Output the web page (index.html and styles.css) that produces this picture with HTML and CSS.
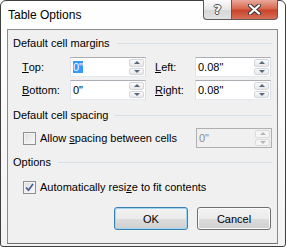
FILE: index.html
```html
<!DOCTYPE html>
<html lang="en">
<head>
    <meta charset="UTF-8">
    <title>Table Options</title>
    <link rel="stylesheet" href="styles.css">
</head>
<body>
    <div class="window">
        <div class="titlebar">
            <span class="title">Table Options</span>
            <div class="caption-buttons">
                <span class="cap-btn help">?</span>
                <span class="cap-btn close">
                    <svg width="13" height="11" viewBox="0 0 13 11">
                        <path d="M2 1.5 L11 9.5 M11 1.5 L2 9.5" stroke="#3b3b3b" stroke-width="4.2" stroke-linecap="round"/>
                        <path d="M2 1.5 L11 9.5 M11 1.5 L2 9.5" stroke="#ffffff" stroke-width="2.2" stroke-linecap="round"/>
                    </svg>
                </span>
            </div>
        </div>

        <div class="client">
            <div class="group-head"><span>Default cell margins</span><i class="rule"></i></div>

            <div class="margin-grid">
                <label class="field-label"><u>T</u>op:</label>
                <div class="spin">
                    <span class="value"><span class="selected">0"</span></span>
                    <span class="arrows"><b class="up"></b><b class="down"></b></span>
                </div>
                <label class="field-label second"><u>L</u>eft:</label>
                <div class="spin">
                    <span class="value">0.08"</span>
                    <span class="arrows"><b class="up"></b><b class="down"></b></span>
                </div>

                <label class="field-label"><u>B</u>ottom:</label>
                <div class="spin">
                    <span class="value">0"</span>
                    <span class="arrows"><b class="up"></b><b class="down"></b></span>
                </div>
                <label class="field-label second"><u>R</u>ight:</label>
                <div class="spin">
                    <span class="value">0.08"</span>
                    <span class="arrows"><b class="up"></b><b class="down"></b></span>
                </div>
            </div>

            <div class="group-head spacing-head"><span>Default cell spacing</span><i class="rule"></i></div>

            <div class="check-row spacing-row">
                <span class="check"></span>
                <span>Allow <u>s</u>pacing between cells</span>
                <div class="spin disabled">
                    <span class="value">0"</span>
                    <span class="arrows"><b class="up"></b><b class="down"></b></span>
                </div>
            </div>

            <div class="group-head options-head"><span>Options</span><i class="rule"></i></div>

            <div class="check-row resize-row">
                <span class="check checked">
                    <svg width="9" height="9" viewBox="0 0 9 9">
                        <path d="M1 4.5 L3.5 7.2 L8 1" fill="none" stroke="#4a5f97" stroke-width="1.8"/>
                    </svg>
                </span>
                <span>Automatically resi<u>z</u>e to fit contents</span>
            </div>

            <div class="buttons">
                <button class="btn default">OK</button>
                <button class="btn">Cancel</button>
            </div>
        </div>
    </div>
</body>
</html>
```

FILE: styles.css
```css
body {
    margin: 0;
    padding: 0;
    font-family: "Liberation Sans", Arial, sans-serif;
    font-size: 11px;
    color: #000000;
    background-color: #ffffff;
    white-space: nowrap;
}

.window {
    box-sizing: border-box;
    width: 286px;
    height: 247px;
    border: 1px solid #3f3f3f;
    border-radius: 6px 6px 3px 3px;
    background: linear-gradient(#ffffff, #f3f3f3);
    display: flex;
    flex-direction: column;
}

.titlebar {
    height: 28px;
    display: flex;
    align-items: flex-start;
}

.title {
    padding: 6px 0 0 7px;
    line-height: 16px;
    font-size: 12px;
}

.caption-buttons {
    margin-left: auto;
    margin-right: 7px;
    margin-top: -1px;
    display: flex;
}

.cap-btn {
    box-sizing: border-box;
    height: 20px;
    display: flex;
    align-items: center;
    justify-content: center;
    border: 1px solid #5b5b5b;
    border-top: none;
}

.help {
    width: 28px;
    border-right: none;
    border-radius: 0 0 0 4px;
    background: linear-gradient(#fbfbfb, #e6e6e6 50%, #d6d6d6 51%, #e2e2e2);
    color: #ffffff;
    font-family: "DejaVu Sans", sans-serif;
    font-weight: bold;
    font-size: 13px;
    text-shadow: 1px 0 0 #4a4a4a, -1px 0 0 #4a4a4a, 0 1px 0 #4a4a4a, 0 -1px 0 #4a4a4a;
}

.close {
    width: 47px;
    border-radius: 0 0 4px 0;
    background: linear-gradient(#e9a99b, #d8684f 45%, #c8432a 55%, #d8705a);
}

.client {
    box-sizing: border-box;
    height: 215px;
    margin: 0 7px 0 6px;
    border: 1px solid #8a8a8a;
    border-bottom-color: #6f6f6f;
    background-color: #f0f0f0;
    display: flex;
    flex-direction: column;
}

.group-head {
    display: flex;
    align-items: center;
    height: 16px;
    line-height: 16px;
    margin: 5px 5px 0 5px;
}

.rule {
    flex: 1;
    height: 1px;
    margin-left: 7px;
    background-color: #d5dfe5;
}

.spacing-head {
    margin-top: 7px;
}

.options-head {
    margin-top: 6px;
}

.margin-grid {
    display: grid;
    grid-template-columns: 48px 76px 49px 76px;
    grid-auto-rows: 20px;
    row-gap: 3px;
    margin: 6px 0 0 14px;
}

.field-label {
    display: flex;
    align-items: center;
}

.field-label.second {
    padding-left: 9px;
}

.spin {
    box-sizing: border-box;
    width: 76px;
    height: 20px;
    display: flex;
    border: 1px solid #abadb3;
    border-color: #abadb3 #dbdfe6 #e3e9ef #e2e3ea;
    background-color: #ffffff;
    padding: 1px;
}

.value {
    flex: 1;
    padding-left: 1px;
    line-height: 16px;
}

.selected {
    background-color: #3399ff;
    color: #ffffff;
}

.arrows {
    width: 15px;
    display: flex;
    flex-direction: column;
    gap: 1px;
}

.arrows b {
    flex: 1;
    box-sizing: border-box;
    border: 1px solid #d3d6db;
    border-radius: 2px;
    background: linear-gradient(#fafafa, #e8e8e8);
    display: flex;
    align-items: center;
    justify-content: center;
}

.arrows b::after {
    content: "";
    border-left: 3px solid transparent;
    border-right: 3px solid transparent;
}

.arrows .up::after {
    border-bottom: 3px solid #55677f;
}

.arrows .down::after {
    border-top: 3px solid #55677f;
}

.spin.disabled {
    margin-left: auto;
    border-color: #afafaf;
    background-color: #f0f0f0;
    color: #8d8d8d;
}

.spin.disabled .arrows b {
    border-color: #dadada;
    background: #f4f4f4;
}

.spin.disabled .up::after {
    border-bottom-color: #b6b6b6;
}

.spin.disabled .down::after {
    border-top-color: #b6b6b6;
}

.check-row {
    display: flex;
    align-items: center;
    height: 20px;
    padding-left: 15px;
}

.spacing-row {
    margin: 5px 5px 0 0;
}

.resize-row {
    margin-top: 7px;
}

.check {
    box-sizing: border-box;
    width: 13px;
    height: 13px;
    margin-right: 4px;
    border: 1px solid #8e8f8f;
    background: linear-gradient(135deg, #dcdcdc, #fbfbfb);
    box-shadow: inset 0 0 0 1px #f4f4f4;
    display: flex;
    align-items: center;
    justify-content: center;
}

.buttons {
    display: flex;
    justify-content: flex-end;
    gap: 9px;
    margin: 10px 6px 0 0;
}

.btn {
    box-sizing: border-box;
    width: 74px;
    height: 23px;
    font-family: inherit;
    font-size: 11px;
    color: #000000;
    border: 1px solid #707070;
    border-radius: 3px;
    background: linear-gradient(#f2f2f2, #ebebeb 50%, #dddddd 51%, #cfcfcf);
    box-shadow: inset 0 0 0 1px #fcfcfc;
    padding: 0;
}

.btn.default {
    border-color: #3c7fb1;
    box-shadow: inset 0 0 0 1px #9fd5f1;
}
```
